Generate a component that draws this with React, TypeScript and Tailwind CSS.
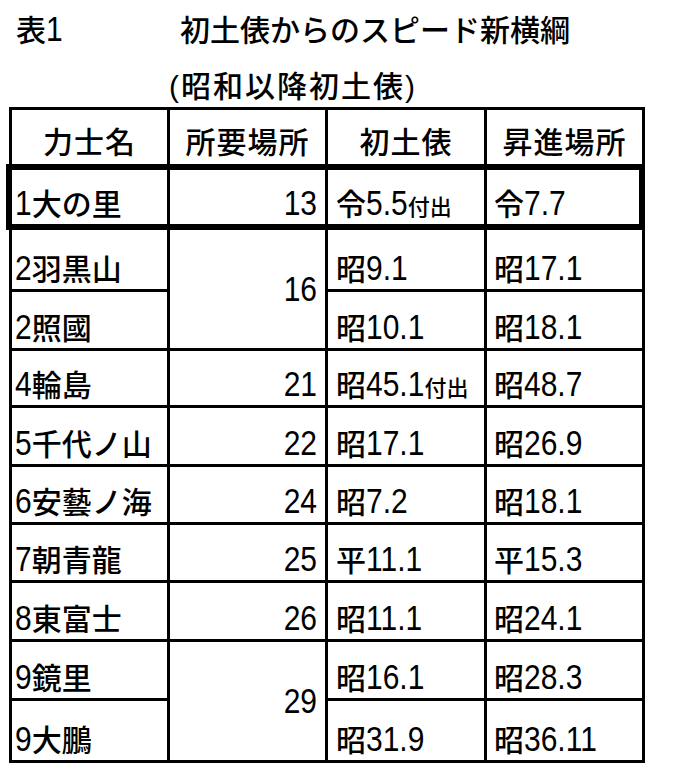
const font = "font-['Liberation_Sans','Noto_Sans_CJK_JP',sans-serif]";
// latin digits in the reference are taller than Liberation's; stretch them a bit
const tall = "inline-block origin-[50%_85%] scale-y-[1.15]";

interface Row {
  name: string;
  places?: string;
  span?: boolean;
  debut: string;
  debutNote?: string;
  promo: string;
}

const rows: Row[] = [
  { name: "2羽黒山", places: "16", span: true, debut: "昭9.1", promo: "昭17.1" },
  { name: "2照國", debut: "昭10.1", promo: "昭18.1" },
  { name: "4輪島", places: "21", debut: "昭45.1", debutNote: "付出", promo: "昭48.7" },
  { name: "5千代ノ山", places: "22", debut: "昭17.1", promo: "昭26.9" },
  { name: "6安藝ノ海", places: "24", debut: "昭7.2", promo: "昭18.1" },
  { name: "7朝青龍", places: "25", debut: "平11.1", promo: "平15.3" },
  { name: "8東富士", places: "26", debut: "昭11.1", promo: "昭24.1" },
  { name: "9鏡里", places: "29", span: true, debut: "昭16.1", promo: "昭28.3" },
  { name: "9大鵬", debut: "昭31.9", promo: "昭36.11" },
];

function T({ s, note }: { s: string; note?: string }) {
  const parts = s.match(/[\x00-\x7f]+|[^\x00-\x7f]+/g) || [];
  return (
    <span className="leading-none">
      {parts.map((p, i) =>
        /^[\x00-\x7f]/.test(p) ? (
          <span key={i} className={tall}>{p}</span>
        ) : (
          <span key={i}>{p}</span>
        )
      )}
      {note && <span className="text-[22px]">{note}</span>}
    </span>
  );
}

const cell = "bg-white flex items-end leading-none pb-[4px] whitespace-nowrap";

export default function App() {
  return (
    <div className={`min-h-screen bg-white text-black text-[30px] font-medium ${font}`}>
      <div className="flex pt-[13px] leading-[36px]">
        <span className="pl-[16px] w-[180px]">表<span className={tall}>1</span></span>
        <span>初土俵からのスピード新横綱</span>
      </div>
      <div className="pl-[169px] pt-[20px] leading-[36px] tracking-[2px]">(昭和以降初土俵)</div>

      <div className="ml-[9px] mt-[2px] w-fit grid grid-cols-[155px_155px_156px_155px] grid-rows-[54px_60px_59px_56px_54px_56px_55px_55px_56px_56px_59px] gap-[3px] bg-black p-[3px]">
        {/* header */}
        {["力士名", "所要場所", "初土俵", "昇進場所"].map((h) => (
          <div key={h} className="bg-white flex items-end justify-center leading-none pb-[6px] tracking-[1px]">
            {h}
          </div>
        ))}

        {/* row 1, thick frame */}
        <div className={`${cell} pl-[3px] border-y-[3px] border-black shadow-[-3px_0_0_3px_#000]`}>
          <T s="1大の里" />
        </div>
        <div className={`${cell} justify-end pr-[8px] border-y-[3px] border-black`}>
          <T s="13" />
        </div>
        <div className={`${cell} pl-[8px] border-y-[3px] border-black`}>
          <T s="令5.5" note="付出" />
        </div>
        <div className={`${cell} pl-[7px] border-y-[3px] border-r-[3px] border-black`}>
          <T s="令7.7" />
        </div>

        {rows.map((r, i) => (
          <>
            <div key={"n" + i} className={`${cell} pl-[3px]`}>
              <T s={r.name} />
            </div>
            {r.places && (
              <div
                key={"p" + i}
                className={`bg-white flex justify-end pr-[8px] leading-none ${
                  r.span ? "row-span-2 items-center pt-[4px]" : "items-end pb-[4px]"
                }`}
              >
                <T s={r.places} />
              </div>
            )}
            <div key={"d" + i} className={`${cell} pl-[8px]`}>
              <T s={r.debut} note={r.debutNote} />
            </div>
            <div key={"s" + i} className={`${cell} pl-[7px]`}>
              <T s={r.promo} />
            </div>
          </>
        ))}
      </div>
    </div>
  );
}
